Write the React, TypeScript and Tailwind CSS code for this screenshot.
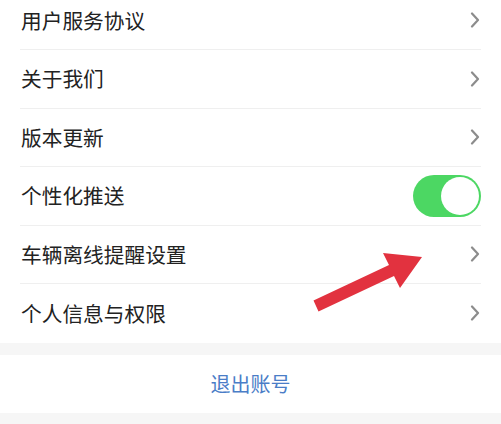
import React from "react";

const font = { fontFamily: '"Noto Sans CJK SC", "Noto Sans", sans-serif' };

function Chevron() {
  return (
    <svg width="10" height="16" viewBox="0 0 10 16" className="mr-[1px]">
      <path d="M2 1.5 L8 8 L2 14.5" fill="none" stroke="#8c8c8c" strokeWidth="2.2" strokeLinecap="round" strokeLinejoin="round" />
    </svg>
  );
}

function Toggle() {
  return (
    <div className="w-[68px] h-[42px] rounded-full bg-[#4cd763] p-[2px] flex justify-end">
      <div className="w-[38px] h-[38px] rounded-full bg-white" />
    </div>
  );
}

const rows: { label: string; toggle?: boolean }[] = [
  { label: "用户服务协议" },
  { label: "关于我们" },
  { label: "版本更新" },
  { label: "个性化推送", toggle: true },
  { label: "车辆离线提醒设置" },
  { label: "个人信息与权限" },
];

export default function App() {
  return (
    <div className="relative w-[501px] h-[424px] overflow-hidden bg-[#f6f6f6]" style={font}>
      <div className="bg-white -mt-[8.5px] px-5">
        {rows.map((r, i) => (
          <div
            key={r.label}
            className={`h-[58.5px] flex items-center justify-between ${i < rows.length - 1 ? "border-b border-[#efefef]" : ""}`}
          >
            <span className="text-[20.7px] text-[#222222] leading-none pl-[1px]">{r.label}</span>
            {r.toggle ? <Toggle /> : <Chevron />}
          </div>
        ))}
      </div>

      <div className="mt-[12.5px] bg-white h-[58px] flex items-center justify-center">
        <span className="text-[20px] text-[#4a7dc7] leading-none">退出账号</span>
      </div>

      {/* red pointer arrow */}
      <svg className="absolute left-0 top-0 pointer-events-none" width="501" height="424">
        <polygon
          points="313.5,300.5 389,265 383,253 422,257 400,288 394,276 318.5,311.5"
          fill="#e2323f"
          strokeLinejoin="round"
        />
      </svg>
    </div>
  );
}
